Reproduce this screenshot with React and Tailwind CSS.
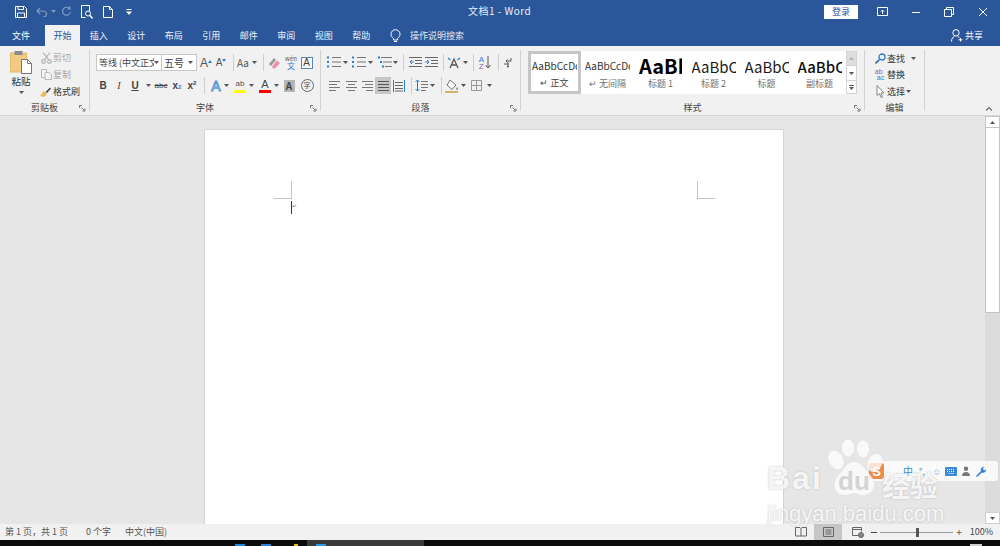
const tabs = ["插入", "设计", "布局", "引用", "邮件", "审阅", "视图", "帮助"];

const styles = [
  { name: "无间隔", sample: "AaBbCcDd", text: "text-[10px] text-[#333]", box: "w-[45px]", mark: true },
  { name: "标题 1", sample: "AaBbCc", text: "text-[20px] font-bold text-black", box: "w-[43px]" },
  { name: "标题 2", sample: "AaBbCc", text: "text-[15px] text-[#1a1a1a]", box: "w-[44px]" },
  { name: "标题", sample: "AaBbCc", text: "text-[15px] text-[#1a1a1a]", box: "w-[44px]" },
  { name: "副标题", sample: "AaBbCc", text: "text-[15px] font-medium text-[#111]", box: "w-[44px]" },
];

export default function App() {
  return (
    <div className="relative w-[1000px] h-[546px] overflow-hidden flex flex-col bg-[#e6e6e6] text-[9px] text-[#444] font-['Noto_Sans_CJK_SC','Noto_Sans',sans-serif]">
      {/* Title bar */}
      <div className="h-[23px] shrink-0 bg-[#2b579a] text-white flex items-center relative">
        <div className="flex items-center pl-[13px]">
          <Cell className="w-[16px]"><SaveIcon /></Cell>
          <Cell className="w-[16px] ml-[5px]"><UndoIcon /></Cell>
          <Cell className="w-[6px]"><Caret color="#7f9ac4" /></Cell>
          <Cell className="w-[16px] ml-[2px]"><RedoIcon /></Cell>
          <Cell className="w-[16px] ml-[5px]"><PreviewIcon /></Cell>
          <Cell className="w-[16px] ml-[5px]"><NewDocIcon /></Cell>
          <Cell className="w-[8px] ml-[9px]"><CustomizeIcon /></Cell>
        </div>
        <div className="absolute left-[468px] top-[3px] text-[10px] leading-[15px] text-[#e8eef7] tracking-[0.5px]">文档1 - Word</div>
        <div className="ml-auto flex items-center">
          <div className="w-[34px] h-[14px] bg-white text-[#2b579a] flex items-center justify-center text-[9px]">登录</div>
          <Cell className="w-[16px] ml-[16px]"><RibbonModeIcon /></Cell>
          <Cell className="w-[16px] ml-[18px]"><svg width="10" height="10"><path d="M1 5.5h8" stroke="#fff" /></svg></Cell>
          <Cell className="w-[16px] ml-[17px]"><RestoreIcon /></Cell>
          <Cell className="w-[16px] ml-[18px] mr-[9px]"><svg width="10" height="10" viewBox="0 0 10 10"><path d="M1 1l8 8M9 1l-8 8" stroke="#fff" /></svg></Cell>
        </div>
      </div>

      {/* Tabs */}
      <div className="h-[23px] shrink-0 bg-[#2b579a] text-white flex items-end">
        <div className="w-[42px] h-[21px] flex items-center justify-center">文件</div>
        <div className="w-[35px] h-[21px] ml-[3px] bg-[#f1f1f1] text-[#2b579a] flex items-center justify-center">开始</div>
        {tabs.map((tab) => (
          <div key={tab} className="w-[37.5px] h-[21px] flex items-center justify-center text-[#eef2f8]">{tab}</div>
        ))}
        <div className="h-[21px] flex items-center ml-[10px] text-[#dfe7f2]">
          <BulbIcon />
          <span className="ml-[9px]">操作说明搜索</span>
        </div>
        <div className="h-[21px] ml-auto mr-[17px] flex items-center">
          <ShareIcon />
          <span className="ml-[2px]">共享</span>
        </div>
      </div>

      {/* Ribbon */}
      <div className="h-[70px] shrink-0 bg-[#f1f1f1] border-b border-[#d6d6d6] flex relative">
        <Group className="w-[89px]" label="剪贴板">
          <div className="flex pt-[4px]">
            <div className="w-[42px] flex flex-col items-center">
              <PasteIcon />
              <span className="text-[9.5px] leading-[13px] mt-[1px] text-[#333]">粘贴</span>
              <div className="mt-[3px]"><Caret /></div>
            </div>
            <div className="flex flex-col -ml-[3px] -mt-[1px]">
              <ClipRow icon={<CutIcon />} label="剪切" muted />
              <ClipRow icon={<CopyIcon />} label="复制" muted />
              <ClipRow icon={<BrushIcon />} label="格式刷" />
            </div>
          </div>
        </Group>
        <Divider />

        <Group className="w-[230px]" label="字体">
          <div className="pt-[8px] flex flex-col gap-[6px]">
            <div className="flex items-center h-[17px] pl-[6px]">
              <div className="w-[66px] h-[17px] bg-white border border-[#c8c8c8] flex items-center pl-[2px] overflow-hidden">
                <span className="w-[55px] whitespace-nowrap overflow-hidden">等线 (中文正文)</span>
                <Caret />
              </div>
              <div className="w-[35px] h-[17px] bg-white border border-l-0 border-[#c8c8c8] flex items-center pl-[2px]">
                <span className="text-[10px] w-[24px]">五号</span>
                <Caret />
              </div>
              <Cell className="w-[16px] ml-[1px]"><GrowIcon up /></Cell>
              <Cell className="w-[14px]"><GrowIcon /></Cell>
              <Sep className="ml-[5px]" />
              <Cell className="w-[18px] text-[10px] text-[#555]">Aa</Cell>
              <Cell className="w-[5px]"><Caret /></Cell>
              <Sep className="ml-[6px]" />
              <Cell className="w-[16px] ml-[2px]"><EraserIcon /></Cell>
              <Cell className="w-[16px] ml-[1px]"><PinyinIcon /></Cell>
              <Cell className="w-[15px]"><BoxedAIcon /></Cell>
            </div>
            <div className="flex items-center h-[17px] pl-[5px]">
              <Cell className="w-[16px] font-bold text-[10px] font-['Liberation_Sans',sans-serif]">B</Cell>
              <Cell className="w-[16px] italic text-[10px] font-['Liberation_Serif',serif]">I</Cell>
              <Cell className="w-[16px] underline text-[10px] font-bold font-['Liberation_Sans',sans-serif]">U</Cell>
              <Cell className="w-[10px]"><Caret /></Cell>
              <Cell className="w-[16px] line-through text-[8px] font-['Liberation_Sans',sans-serif]">abc</Cell>
              <Cell className="w-[16px] font-bold text-[10px] font-['Liberation_Sans',sans-serif]">x<sub className="text-[6px] text-[#2b7cd3]">2</sub></Cell>
              <Cell className="w-[14px] font-bold text-[10px] font-['Liberation_Sans',sans-serif]">x<sup className="text-[6px]">2</sup></Cell>
              <Sep className="ml-[5px]" />
              <Cell className="w-[16px] ml-[3px]"><GlowAIcon /></Cell>
              <Cell className="w-[5px]"><Caret /></Cell>
              <Cell className="w-[16px] ml-[3px]"><ColorBarIcon bar="#ffff00" kind="ab" /></Cell>
              <Cell className="w-[5px] ml-[1px]"><Caret /></Cell>
              <Cell className="w-[16px] ml-[3px]"><ColorBarIcon bar="#ff0000" kind="A" /></Cell>
              <Cell className="w-[5px] ml-[1px]"><Caret /></Cell>
              <Cell className="w-[16px] ml-[2px]"><div className="w-[11px] h-[12px] bg-[#b5b5b5] flex items-center justify-center text-[10px] font-bold text-[#444] leading-none">A</div></Cell>
              <Cell className="w-[16px] ml-[2px]"><div className="w-[13px] h-[13px] rounded-full border border-[#666] flex items-center justify-center text-[7px] leading-none">字</div></Cell>
            </div>
          </div>
        </Group>
        <Divider />

        <Group className="w-[199px]" label="段落">
          <div className="pt-[8px] flex flex-col gap-[6px]">
            <div className="flex items-center h-[17px] pl-[5px]">
              <Cell className="w-[16px]"><ListIcon kind="bullet" /></Cell>
              <Cell className="w-[5px] ml-[1px]"><Caret /></Cell>
              <Cell className="w-[16px] ml-[3px]"><ListIcon kind="number" /></Cell>
              <Cell className="w-[5px] ml-[1px]"><Caret /></Cell>
              <Cell className="w-[16px] ml-[4px]"><ListIcon kind="multi" /></Cell>
              <Cell className="w-[5px]"><Caret /></Cell>
              <Sep className="ml-[5px]" />
              <Cell className="w-[16px] ml-[3px]"><IndentIcon /></Cell>
              <Cell className="w-[16px]"><IndentIcon increase /></Cell>
              <Sep className="ml-[4px]" />
              <Cell className="w-[16px] ml-[2px]"><AsianLayoutIcon /></Cell>
              <Cell className="w-[5px] ml-[1px]"><Caret /></Cell>
              <Sep className="ml-[5px]" />
              <Cell className="w-[16px] ml-[3px]"><SortIcon /></Cell>
              <Sep className="ml-[5px]" />
              <Cell className="w-[16px] ml-[1px]"><MarksIcon /></Cell>
            </div>
            <div className="flex items-center h-[17px] pl-[5px]">
              <Cell className="w-[16px]"><AlignIcon kind="left" /></Cell>
              <Cell className="w-[16px] ml-[1px]"><AlignIcon kind="center" /></Cell>
              <Cell className="w-[16px]"><AlignIcon kind="right" /></Cell>
              <Cell className="w-[16px] bg-[#c6c6c6]"><AlignIcon kind="justify" /></Cell>
              <Cell className="w-[16px]"><DistributeIcon /></Cell>
              <Sep className="ml-[4px]" />
              <Cell className="w-[16px] ml-[1px]"><LineSpacingIcon /></Cell>
              <Cell className="w-[5px] ml-[1px]"><Caret /></Cell>
              <Sep className="ml-[6px]" />
              <Cell className="w-[16px] ml-[2px]"><ShadingIcon /></Cell>
              <Cell className="w-[5px] ml-[1px]"><Caret /></Cell>
              <Cell className="w-[16px] ml-[2px]"><BorderIcon /></Cell>
              <Cell className="w-[5px] ml-[3px]"><Caret /></Cell>
            </div>
          </div>
        </Group>
        <Divider />

        <Group className="w-[343px]" label="样式">
          <div className="pt-[5px] pl-[7px] flex">
            <div className="w-[318px] h-[43px] bg-white flex">
              <div className="w-[53px] h-[43px] border-[3px] border-[#c6c6c6] flex flex-col items-center overflow-hidden">
                <div className="w-[45px] mt-[5px] overflow-hidden">
                  <span className="block text-[10px] leading-[14px] text-[#333] whitespace-nowrap">AaBbCcDd</span>
                </div>
                <span className="text-[9px] leading-[13px] mt-[3px] text-[#444]">↵ 正文</span>
              </div>
              {styles.map((s) => (
                <div key={s.name} className="w-[53px] h-[43px] flex flex-col items-center overflow-hidden">
                  <div className={`${s.box} h-[22px] mt-[4px] overflow-hidden flex items-center`}>
                    <span className={`${s.text} leading-none whitespace-nowrap`}>{s.sample}</span>
                  </div>
                  <span className="text-[9px] leading-[13px] text-[#707070]">{s.mark ? "↵ " : ""}{s.name}</span>
                </div>
              ))}
            </div>
            <div className="w-[11px] h-[43px] flex flex-col">
              <div className="h-[15px] bg-[#dedede] border border-[#d4d4d4] flex items-center justify-center"><Caret up color="#b0b0b0" /></div>
              <div className="h-[14px] bg-white border-x border-[#d4d4d4] flex items-center justify-center"><Caret color="#555" /></div>
              <div className="h-[14px] bg-white border border-[#d4d4d4] flex flex-col items-center justify-center">
                <div className="w-[5px] h-px bg-[#555] mb-px" />
                <Caret color="#555" />
              </div>
            </div>
          </div>
        </Group>
        <Divider />

        <Group className="w-[59px]" label="编辑" noLauncher>
          <div className="pt-[4px] flex flex-col pl-[8px]">
            <EditRow icon={<FindIcon />} label="查找" caret="ml-[6px]" />
            <EditRow icon={<ReplaceIcon />} label="替换" />
            <EditRow icon={<SelectIcon />} label="选择" caret="ml-[1px]" />
          </div>
        </Group>
        <Divider />

        <div className="ml-auto mr-[7px] self-end mb-[2px]">
          <svg width="8" height="8" viewBox="0 0 8 8"><path d="M1 5.5l3-3 3 3" fill="none" stroke="#666" strokeWidth="1.1" /></svg>
        </div>
      </div>

      {/* Document area */}
      <div className="flex-1 min-h-0 flex">
        <div className="flex-1 pl-[204px] pt-[13px] overflow-hidden">
          <div className="w-[580px] h-[500px] bg-white border border-[#d4d4d4] pt-[51px] pl-[69px] pr-[68px]">
            <div className="flex justify-between">
              <div className="w-[18px] h-[18px] border-r border-b border-[#c4c4c4]" />
              <div className="w-[18px] h-[18px] border-l border-b border-[#c4c4c4]" />
            </div>
            <div className="ml-[17px] mt-[2px] flex">
              <div className="w-px h-[13px] bg-[#333]" />
              <span className="text-[6px] leading-[10px] text-[#888]">↵</span>
            </div>
          </div>
        </div>
        <div className="w-[15px] shrink-0 bg-[#dcdcdc] flex flex-col">
          <div className="h-[12px] bg-white border border-[#c4c4c4] flex items-center justify-center"><Caret up color="#555" /></div>
          <div className="h-[185px] bg-white border border-t-0 border-[#c4c4c4]" />
          <div className="flex-1" />
          <div className="h-[12px] bg-white border border-[#d0d0d0] flex items-center justify-center"><Caret color="#555" /></div>
        </div>
      </div>

      {/* Status bar */}
      <div className="h-[16px] shrink-0 bg-[#f1f1f1] flex items-center text-[#555] text-[9px]">
        <span className="ml-[5px]">第 1 页，共 1 页</span>
        <span className="ml-[18px]">0 个字</span>
        <span className="ml-[14px]">中文(中国)</span>
        <div className="ml-auto flex items-center h-full">
          <Cell className="w-[16px] mr-[5px]"><ReadViewIcon /></Cell>
          <div className="w-[28px] h-full bg-[#c6c6c6] flex items-center justify-center"><PrintViewIcon /></div>
          <Cell className="w-[16px] ml-[8px]"><WebViewIcon /></Cell>
          <span className="ml-[5px] w-[6px] h-px bg-[#444]" />
          <div className="ml-[3px] w-[73px] h-px bg-[#999] flex items-center justify-center">
            <div className="w-[3px] h-[9px] bg-[#555] ml-[1px]" />
          </div>
          <span className="ml-[3px] text-[10px] leading-none">+</span>
          <span className="ml-[8px] mr-[7px] text-[#444]">100%</span>
        </div>
      </div>

      {/* Taskbar, only the top edge is in frame */}
      <div className="h-[6px] shrink-0 bg-[#0b0b0b] overflow-hidden relative">
        <div className="absolute left-[307px] top-0 w-[117px] h-[6px] bg-[#3a3a3a]" />
        <div className="absolute left-[235px] top-[4px] w-[10px] h-[2px] bg-[#1e88d8]" />
        <div className="absolute left-[261px] top-[4px] w-[10px] h-[2px] bg-[#2f80d0]" />
        <div className="absolute left-[294px] top-[4px] w-[4px] h-[2px] bg-[#e8c020]" />
        <div className="absolute left-[316px] top-[4px] w-[10px] h-[2px] bg-[#2b9be8]" />
        <div className="absolute left-[970px] top-[4px] w-[12px] h-[2px] bg-[#cfcfcf]" />
      </div>

      <Watermark />
    </div>
  );
}

/* ---------- layout helpers ---------- */

function Cell({ className, children }) {
  return <div className={`h-[17px] shrink-0 flex items-center justify-center ${className}`}>{children}</div>;
}

function Sep({ className }) {
  return <div className={`w-px h-[17px] shrink-0 bg-[#cfcfcf] ${className}`} />;
}

function Divider() {
  return <div className="w-px my-[4px] shrink-0 bg-[#d2d2d2]" />;
}

function Group({ className, label, noLauncher, children }) {
  return (
    <div className={`shrink-0 flex flex-col ${className}`}>
      <div className="h-[54px]">{children}</div>
      <div className="h-[15px] pt-[1px] flex items-center justify-center relative text-[#444]">
        {label}
        {!noLauncher && (
          <svg className="absolute right-[3px] top-[5px]" width="7" height="7" viewBox="0 0 7 7">
            <path d="M.5 3V.5H3M2.5 2.5l3.5 3.5M6 3.5V6H3.5" fill="none" stroke="#777" />
          </svg>
        )}
      </div>
    </div>
  );
}

function ClipRow({ icon, label, muted }) {
  return (
    <div className={`h-[17px] flex items-center ${muted ? "text-[#a8a8a8]" : "text-[#333]"}`}>
      <div className="w-[14px] flex justify-center">{icon}</div>
      <span className="whitespace-nowrap">{label}</span>
    </div>
  );
}

function EditRow({ icon, label, caret }) {
  return (
    <div className="h-[16.5px] flex items-center text-[#333]">
      <div className="w-[14px] flex justify-center">{icon}</div>
      <span className="whitespace-nowrap">{label}</span>
      {caret && <div className={caret}><Caret /></div>}
    </div>
  );
}

function Caret({ up, color = "#555" }) {
  return (
    <svg width="5" height="3" viewBox="0 0 5 3" className="shrink-0">
      <path d={up ? "M0 3l2.5-3L5 3z" : "M0 0h5L2.5 3z"} fill={color} />
    </svg>
  );
}

/* ---------- title bar icons ---------- */

function SaveIcon() {
  return (
    <svg width="12" height="12" viewBox="0 0 12 12" fill="none" stroke="#fff">
      <path d="M.5.5h9l2 2v9H.5z" />
      <path d="M3 .5v3h5.5v-3M2.5 11.5V7h7v4.5" />
    </svg>
  );
}

function UndoIcon() {
  return (
    <svg width="12" height="10" viewBox="0 0 12 10" fill="none" stroke="#7f9ac4" strokeWidth="1.2">
      <path d="M4 1L1 4l3 3M1 4h6a3.5 3 0 0 1 0 6" />
    </svg>
  );
}

function RedoIcon() {
  return (
    <svg width="11" height="11" viewBox="0 0 11 11" fill="none" stroke="#7f9ac4" strokeWidth="1.2">
      <path d="M8.5 2.5A4 4 0 1 0 9.5 6M9 .5v2.5H6.5" />
    </svg>
  );
}

function PreviewIcon() {
  return (
    <svg width="12" height="14" viewBox="0 0 12 14" fill="none" stroke="#fff">
      <path d="M8.5 6V.5h-8v12h4" />
      <circle cx="7" cy="8.5" r="2.5" />
      <path d="M9 10.5l2.5 3" strokeWidth="1.4" />
    </svg>
  );
}

function NewDocIcon() {
  return (
    <svg width="10" height="12" viewBox="0 0 10 12" fill="none" stroke="#fff">
      <path d="M.5.5h6l3 3v8h-9zM6.5.5v3h3" />
    </svg>
  );
}

function CustomizeIcon() {
  return (
    <svg width="6" height="6" viewBox="0 0 6 6" fill="#fff">
      <path d="M.5 0h5v1h-5zM0 2.5h6L3 6z" />
    </svg>
  );
}

function RibbonModeIcon() {
  return (
    <svg width="11" height="9" viewBox="0 0 11 9" fill="none" stroke="#fff">
      <path d="M.5.5h10v8H.5z" />
      <path d="M5.5 7V3M4 4.5l1.5-1.5L7 4.5" />
    </svg>
  );
}

function RestoreIcon() {
  return (
    <svg width="10" height="10" viewBox="0 0 10 10" fill="none" stroke="#fff">
      <path d="M.5 2.5h7v7h-7zM2.5 2.5v-2h7v7h-2" />
    </svg>
  );
}

function BulbIcon() {
  return (
    <svg width="11" height="14" viewBox="0 0 11 14" fill="none" stroke="#fff">
      <path d="M3.5 9.5C2 8.3 1 7 1 5.2a4.5 4.5 0 0 1 9 0C10 7 9 8.3 7.5 9.5V11h-4zM4 12.5h3" />
    </svg>
  );
}

function ShareIcon() {
  return (
    <svg width="12" height="13" viewBox="0 0 12 13" fill="none" stroke="#fff">
      <circle cx="5" cy="3.8" r="3.2" />
      <path d="M.5 12.5c0-2.8 1.5-4.5 3-5.2M6.5 7.3c.8.3 1.4.8 1.9 1.5M9.5 9v3.5M7.5 10.8h4" />
    </svg>
  );
}

/* ---------- clipboard icons ---------- */

function PasteIcon() {
  return (
    <svg width="22" height="24" viewBox="0 0 22 24">
      <rect x="0.5" y="3" width="16" height="19" fill="#f0cc82" stroke="#e3bb6c" />
      <rect x="4.5" y="1" width="8" height="4" fill="#8a8a8a" />
      <path d="M11.5 9.5h6l4 4v10h-10z" fill="#fff" stroke="#777" />
      <path d="M17.5 9.5v4h4" fill="none" stroke="#777" />
    </svg>
  );
}

function CutIcon() {
  return (
    <svg width="11" height="12" viewBox="0 0 11 12" fill="none" stroke="#b0b0b0" strokeWidth="1.2">
      <path d="M2 .5l5.5 7M9 .5l-5.5 7" />
      <circle cx="2.5" cy="9.5" r="1.8" />
      <circle cx="8.5" cy="9.5" r="1.8" />
    </svg>
  );
}

function CopyIcon() {
  return (
    <svg width="11" height="11" viewBox="0 0 11 11" fill="#f4f4f4" stroke="#b8b8b8">
      <path d="M.5.5h5v8h-5z" />
      <path d="M4 3.5h4L10.5 6v4.5H4z" />
    </svg>
  );
}

function BrushIcon() {
  return (
    <svg width="12" height="11" viewBox="0 0 12 11">
      <path d="M0 10l4-5 3 3-3 3z" fill="#eab75a" />
      <path d="M5.5 6L10 1.5l1 1L7 7z" fill="#444" />
    </svg>
  );
}

/* ---------- font icons ---------- */

function GrowIcon({ up }) {
  return (
    <div className={`relative flex items-end font-['Liberation_Sans',sans-serif] text-[#555] leading-none ${up ? "text-[12px]" : "text-[10px]"}`}>
      A
      <svg width="4" height="3" viewBox="0 0 4 3" className="mb-[6px]">
        <path d={up ? "M0 3l2-3 2 3z" : "M0 0h4L2 3z"} fill="#2b7cd3" />
      </svg>
    </div>
  );
}

function EraserIcon() {
  return (
    <svg width="13" height="13" viewBox="0 0 13 13">
      <path d="M1 8l5-6 2 2-5 6z" fill="#999" />
      <path d="M4 10.5l5-6 3 2.5-5 5.500H5z" fill="#ee8fa6" />
    </svg>
  );
}

function PinyinIcon() {
  return (
    <div className="flex flex-col items-center leading-none">
      <span className="text-[6px] leading-[7px] text-[#555]">wén</span>
      <span className="text-[8px] leading-[8px] text-[#2b7cd3]">文</span>
    </div>
  );
}

function BoxedAIcon() {
  return (
    <div className="w-[12px] h-[12px] border border-[#5b88b8] bg-[#f8f8f8] flex items-center justify-center text-[10px] leading-none text-[#444] font-['Liberation_Sans',sans-serif]">A</div>
  );
}

function GlowAIcon() {
  return (
    <span className="text-[14px] leading-none font-['Liberation_Sans',sans-serif] text-[#e9f1fa] [-webkit-text-stroke:1px_#5b9bd5]">A</span>
  );
}

function ColorBarIcon({ bar, kind }) {
  return (
    <div className="flex flex-col items-center w-[12px]">
      <span className={`leading-[10px] font-['Liberation_Sans',sans-serif] ${kind === "A" ? "text-[11px] text-[#444]" : "text-[8px] text-[#555]"}`}>{kind}</span>
      <div className="w-[12px] h-[3px] mt-[1px]" style={{ backgroundColor: bar }} />
    </div>
  );
}

/* ---------- paragraph icons ---------- */

function ListIcon({ kind }) {
  const multi = kind === "multi";
  return (
    <svg width="14" height="13" viewBox="0 0 14 13">
      {[1.5, 6, 10.5].map((y, i) => (
        <g key={y}>
          <rect x={multi ? i * 2 : 0} y={y - 1} width="2" height="2" fill="#2b7cd3" />
          <path d={`M${multi ? 3 + i * 2 : 5} ${y}H14`} stroke="#777" />
        </g>
      ))}
    </svg>
  );
}

function IndentIcon({ increase }) {
  return (
    <svg width="13" height="11" viewBox="0 0 13 11">
      <path d="M0 .5h13M6 3.5h7M6 6.5h7M0 9.5h13" stroke="#666" />
      <path d={increase ? "M0 5h3M2 3l2 2-2 2" : "M5 5H1M3 3L1 5l2 2"} fill="none" stroke="#2b7cd3" />
    </svg>
  );
}

function AsianLayoutIcon() {
  return (
    <svg width="14" height="12" viewBox="0 0 14 12">
      <path d="M3 11l4-9 4 9M4.5 8h5" fill="none" stroke="#555" strokeWidth="1.3" />
      <path d="M1 1l2.500 2M13 1l-2.500 2" stroke="#2b7cd3" strokeWidth="1.3" />
    </svg>
  );
}

function SortIcon() {
  return (
    <div className="flex items-center">
      <div className="flex flex-col leading-[7px] text-[8px] font-['Liberation_Sans',sans-serif]">
        <span className="text-[#2b7cd3]">A</span>
        <span className="text-[#8e5fb5]">Z</span>
      </div>
      <svg width="6" height="13" viewBox="0 0 6 13" className="ml-px">
        <path d="M3 0v11M.5 9L3 12l2.5-3" fill="none" stroke="#555" />
      </svg>
    </div>
  );
}

function MarksIcon() {
  return (
    <svg width="10" height="11" viewBox="0 0 10 11" fill="none" stroke="#555">
      <path d="M8 1v3H3M4.5 2.5L3 4l1.5 1.5" />
      <path d="M5.5 7H1M4 9.5h2M5 5.5v5" />
    </svg>
  );
}

function AlignIcon({ kind }) {
  const rows = {
    left: ["M0 .5h11", "M0 3.5h8", "M0 6.5h11", "M0 9.5h7"],
    center: ["M0 .5h11", "M2 3.5h7", "M0 6.5h11", "M2 9.5h7"],
    right: ["M0 .5h11", "M3 3.5h8", "M0 6.5h11", "M4 9.5h7"],
    justify: ["M0 .5h11", "M0 3.5h11", "M0 6.5h11", "M0 9.5h11"],
  };
  return (
    <svg width="11" height="10" viewBox="0 0 11 10">
      {rows[kind].map((d) => (
        <path key={d} d={d} stroke={kind === "justify" ? "#555" : "#777"} />
      ))}
    </svg>
  );
}

function DistributeIcon() {
  return (
    <svg width="12" height="12" viewBox="0 0 12 12">
      <path d="M.5 0v12M11.5 0v12" stroke="#2b7cd3" />
      <path d="M2 2.5h8M2 5.5h8M2 8.5h8M2 11h8" stroke="#666" />
    </svg>
  );
}

function LineSpacingIcon() {
  return (
    <svg width="13" height="13" viewBox="0 0 13 13">
      <path d="M2.5 1v11M.5 3l2-2 2 2M.5 10l2 2 2-2" fill="none" stroke="#2b7cd3" />
      <path d="M6 2.5h7M6 5.5h7M6 8.5h7M6 11.5h5" stroke="#777" />
    </svg>
  );
}

function ShadingIcon() {
  return (
    <svg width="14" height="14" viewBox="0 0 14 14">
      <path d="M5 1l6 5-4 4.500L2 6z" fill="#f6f6f6" stroke="#777" />
      <path d="M12 8c1 1.500 1.500 2.500 0 3-1-.5-1-1.500 0-3z" fill="#777" />
      <rect x="0" y="12" width="13" height="2" fill="#d5b26a" />
    </svg>
  );
}

function BorderIcon() {
  return (
    <svg width="11" height="11" viewBox="0 0 11 11" fill="none" stroke="#999">
      <path d="M.5.5h10v10H.5zM5.500.5v10M.5 5.500h10" />
    </svg>
  );
}

/* ---------- editing icons ---------- */

function FindIcon() {
  return (
    <svg width="11" height="11" viewBox="0 0 11 11" fill="none">
      <circle cx="7" cy="4" r="3" stroke="#2b7cd3" strokeWidth="1.3" />
      <path d="M4.5 6.500L.5 10.500" stroke="#2b6cb0" strokeWidth="1.6" />
    </svg>
  );
}

function ReplaceIcon() {
  return (
    <div className="flex flex-col leading-[6px] text-[7px] font-['Liberation_Sans',sans-serif] pr-px">
      <span className="text-[#8e5fb5]">ab</span>
      <span className="text-[#2b7cd3] ml-[2px]">ac</span>
    </div>
  );
}

function SelectIcon() {
  return (
    <svg width="9" height="13" viewBox="0 0 9 13">
      <path d="M1 .5v10l2.500-2 1.500 4 1.500-.5-1.500-4H8z" fill="#fff" stroke="#888" />
    </svg>
  );
}

/* ---------- status bar icons ---------- */

function ReadViewIcon() {
  return (
    <svg width="12" height="10" viewBox="0 0 12 10" fill="none" stroke="#666">
      <path d="M.5.5H5l1 1 1-1h4.500V9H.5zM6 1.500V9" />
    </svg>
  );
}

function PrintViewIcon() {
  return (
    <svg width="11" height="10" viewBox="0 0 11 10" fill="none" stroke="#666">
      <path d="M.5.5h10v9H.5zM2.500 3h6M2.500 5h6M2.500 7h6" />
    </svg>
  );
}

function WebViewIcon() {
  return (
    <svg width="12" height="11" viewBox="0 0 12 11" fill="none" stroke="#666">
      <path d="M7 8.500H.5V.5h9v4M.5 2.500h9" />
      <circle cx="9" cy="8" r="2.500" fill="#888" />
    </svg>
  );
}

/* ---------- baidu watermark + IME toolbar, these lie over the page ---------- */

function Watermark() {
  return (
    <>
      {/* IME toolbar */}
      <div className="absolute left-[873px] top-[461px] w-[125px] h-[20px] rounded-[3px] bg-white/80 flex items-center pl-[30px]">
        <span className="w-[10px] text-[10px] text-[#3b8ad9] leading-none">中</span>
        <span className="ml-[6px] w-[5px] text-[9px] text-[#3b8ad9] leading-none">°,</span>
        <span className="ml-[8px] w-[6px] text-[9px] text-[#8fbbe8] leading-none">☺</span>
        <svg width="12" height="9" viewBox="0 0 12 9" className="ml-[7px] shrink-0">
          <rect width="12" height="9" rx="1" fill="#3b8ad9" />
          <path d="M2 2.5h8M2 4.5h8M3.500 6.500h5" stroke="#fff" strokeDasharray="1 1" />
        </svg>
        <svg width="8" height="10" viewBox="0 0 9 11" fill="#777" className="ml-[5px] shrink-0">
          <circle cx="4.5" cy="3" r="2.500" />
          <path d="M0 11c0-3 2-4.500 4.500-4.500S9 8 9 11z" />
        </svg>
        <svg width="11" height="11" viewBox="0 0 11 11" className="ml-[5px] shrink-0">
          <path d="M1 10l5-5a3 3 0 0 1 3.500-4L8 2.500l.5 1.500 1.500.5L11 3a3 3 0 0 1-4 3.500l-5 4.500z" fill="#2f80d8" />
        </svg>
      </div>
      <div className="absolute left-[869px] top-[463px] w-[15px] h-[16px] rounded-[3px] bg-[#ee8a4a] flex items-center justify-center text-white text-[13px] font-bold leading-none font-['Liberation_Sans',sans-serif]">S</div>

      {/* Paw */}
      <svg className="absolute left-[826px] top-[440px]" width="58" height="60" viewBox="0 0 58 60" fill="#fff" fillOpacity="0.75">
        <ellipse cx="10" cy="20" rx="7" ry="10" transform="rotate(-25 10 20)" />
        <ellipse cx="22" cy="8" rx="6" ry="8.5" />
        <ellipse cx="37" cy="9" rx="6" ry="8.5" />
        <ellipse cx="49" cy="23" rx="7" ry="9.5" transform="rotate(25 49 23)" />
        <path d="M28 22c8 0 11 8 17 14 6 7 3 19-8 19-4 0-6-2-9-2s-6 2-10 2C8 55 6 43 12 36c6-5 8-14 16-14z" />
      </svg>

      <div className="absolute left-[767px] top-[461px] text-[32px] leading-[34px] tracking-[2px] font-bold text-white/85 [text-shadow:0_0_2px_#b4b4b4] font-['Liberation_Sans',sans-serif]">Bai</div>
      <div className="absolute left-[838px] top-[467px] text-[26px] leading-[28px] font-bold text-[#d4d4d4] font-['Liberation_Sans',sans-serif]">du</div>
      <div className="absolute left-[882px] top-[470px] text-[28px] leading-[30px] font-bold text-white/85 [text-shadow:0_0_2px_#b4b4b4]">经验</div>
      <div className="absolute left-[767px] top-[502px] text-[22px] leading-[24px] text-white/85 [text-shadow:0_0_2px_#b4b4b4] font-['Liberation_Sans',sans-serif] whitespace-nowrap">jingyan.baidu.com</div>
    </>
  );
}
